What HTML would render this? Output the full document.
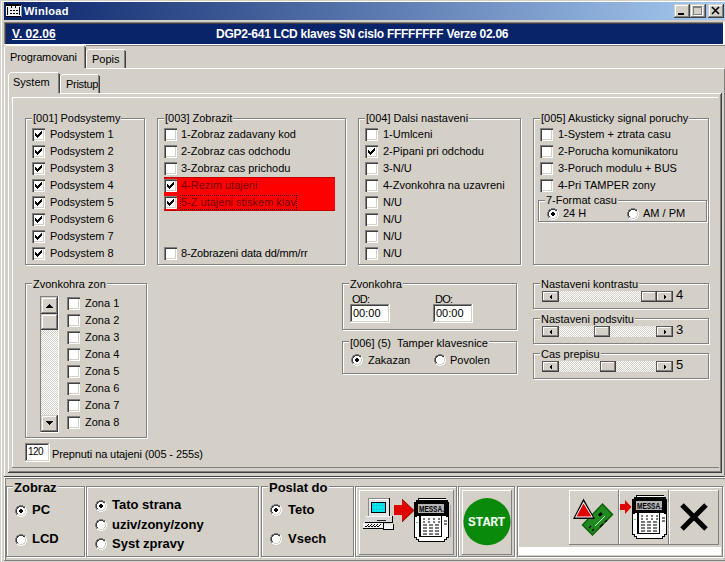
<!DOCTYPE html><html><head><meta charset="utf-8"><style>
html,body{margin:0;padding:0;}
body{width:725px;height:562px;position:relative;overflow:hidden;background:#d4d0c8;font-family:"Liberation Sans",sans-serif;}
body>div,div>div{position:absolute;}
.t{white-space:pre;font-family:"Liberation Sans",sans-serif;}
svg{display:block;}
</style></head><body>
<div style="left:0px;top:0px;width:725px;height:562px;background:#d4d0c8;"></div>
<div style="left:1px;top:1px;width:724px;height:1px;background:#ffffff;"></div>
<div style="left:1px;top:1px;width:1px;height:561px;background:#ffffff;"></div>
<div style="left:4px;top:2px;width:721px;height:18px;background:linear-gradient(to right,#0a246a,#a6caf0);"></div>
<div style="left:6px;top:4px;width:16px;height:14px;"><svg width="16" height="14" shape-rendering="crispEdges"><rect x="0" y="0" width="15" height="2" fill="#000"/><rect x="0" y="2" width="15" height="10" fill="#fff"/><rect x="1" y="3" width="1" height="8" fill="#000"/><rect x="13" y="3" width="1" height="8" fill="#000"/><rect x="2" y="3" width="11" height="8" fill="#ececec"/><rect x="5" y="2" width="1" height="2" fill="#000"/><rect x="9" y="2" width="1" height="2" fill="#000"/><rect x="4" y="6" width="2" height="1" fill="#000"/><rect x="7" y="6" width="2" height="1" fill="#000"/><rect x="10" y="6" width="2" height="1" fill="#000"/><rect x="4" y="9" width="2" height="1" fill="#000"/><rect x="7" y="9" width="2" height="1" fill="#000"/><rect x="10" y="9" width="2" height="1" fill="#000"/><rect x="0" y="12" width="15" height="1" fill="#000"/><rect x="15" y="1" width="1" height="12" fill="#8890a8"/></svg></div>
<div class="t" style="left:24px;top:6px;font-size:11px;line-height:11px;font-weight:bold;color:#fff;letter-spacing:0.3px;">Winload</div>
<div style="left:674px;top:4px;width:16px;height:14px;background:#d4d0c8;"></div>
<div style="left:674px;top:17px;width:16px;height:1px;background:#404040;"></div>
<div style="left:689px;top:4px;width:1px;height:14px;background:#404040;"></div>
<div style="left:675px;top:16px;width:14px;height:1px;background:#808080;"></div>
<div style="left:688px;top:5px;width:1px;height:12px;background:#808080;"></div>
<div style="left:675px;top:5px;width:13px;height:1px;background:#ffffff;"></div>
<div style="left:675px;top:5px;width:1px;height:11px;background:#ffffff;"></div>
<div style="left:674px;top:4px;width:15px;height:1px;background:#d4d0c8;"></div>
<div style="left:674px;top:4px;width:1px;height:13px;background:#d4d0c8;"></div>
<div style="left:690px;top:4px;width:16px;height:14px;background:#d4d0c8;"></div>
<div style="left:690px;top:17px;width:16px;height:1px;background:#404040;"></div>
<div style="left:705px;top:4px;width:1px;height:14px;background:#404040;"></div>
<div style="left:691px;top:16px;width:14px;height:1px;background:#808080;"></div>
<div style="left:704px;top:5px;width:1px;height:12px;background:#808080;"></div>
<div style="left:691px;top:5px;width:13px;height:1px;background:#ffffff;"></div>
<div style="left:691px;top:5px;width:1px;height:11px;background:#ffffff;"></div>
<div style="left:690px;top:4px;width:15px;height:1px;background:#d4d0c8;"></div>
<div style="left:690px;top:4px;width:1px;height:13px;background:#d4d0c8;"></div>
<div style="left:708px;top:4px;width:16px;height:14px;background:#d4d0c8;"></div>
<div style="left:708px;top:17px;width:16px;height:1px;background:#404040;"></div>
<div style="left:723px;top:4px;width:1px;height:14px;background:#404040;"></div>
<div style="left:709px;top:16px;width:14px;height:1px;background:#808080;"></div>
<div style="left:722px;top:5px;width:1px;height:12px;background:#808080;"></div>
<div style="left:709px;top:5px;width:13px;height:1px;background:#ffffff;"></div>
<div style="left:709px;top:5px;width:1px;height:11px;background:#ffffff;"></div>
<div style="left:708px;top:4px;width:15px;height:1px;background:#d4d0c8;"></div>
<div style="left:708px;top:4px;width:1px;height:13px;background:#d4d0c8;"></div>
<div style="left:678px;top:13px;width:6px;height:2px;background:#000;"></div>
<div style="left:693px;top:6px;width:9px;height:9px;border:1px solid #808080;border-top-width:2px;box-sizing:border-box;box-shadow:1px 1px #fff;"></div>
<div style="left:711px;top:6px;width:10px;height:9px;"><svg width="10" height="9"><path d="M1 1L8 8M8 1L1 8" stroke="#000" stroke-width="1.6"/></svg></div>
<div style="left:4px;top:22px;width:721px;height:24px;background:#808080;"></div>
<div style="left:5px;top:23px;width:720px;height:22px;background:#404040;"></div>
<div style="left:6px;top:24px;width:717px;height:20px;background:#0a246a;"></div>
<div style="left:4px;top:44px;width:721px;height:1px;background:#ffffff;"></div>
<div style="left:723px;top:22px;width:2px;height:23px;background:#ffffff;"></div>
<div class="t" style="left:12px;top:28px;font-size:12px;line-height:12px;font-weight:bold;color:#fff;text-decoration-thickness:1px;text-underline-offset:1px;"><u>V. 02.06</u></div>
<div class="t" style="left:216px;top:28px;font-size:12px;line-height:12px;font-weight:bold;color:#fff;letter-spacing:-0.27px;">DGP2-641 LCD klaves SN cislo FFFFFFFF Verze 02.06</div>
<div style="left:4px;top:68px;width:721px;height:409px;background:#d4d0c8;"></div>
<div style="left:4px;top:68px;width:720px;height:1px;background:#ffffff;"></div>
<div style="left:4px;top:68px;width:1px;height:408px;background:#ffffff;"></div>
<div style="left:4px;top:476px;width:721px;height:1px;background:#404040;"></div>
<div style="left:724px;top:69px;width:1px;height:408px;background:#808080;"></div>
<div style="left:5px;top:475px;width:719px;height:1px;background:#d4d0c8;"></div>
<div style="left:4px;top:45px;width:82px;height:24px;background:#d4d0c8;"></div>
<div style="left:6px;top:45px;width:78px;height:1px;background:#ffffff;"></div>
<div style="left:5px;top:46px;width:1px;height:1px;background:#ffffff;"></div>
<div style="left:4px;top:47px;width:1px;height:22px;background:#ffffff;"></div>
<div style="left:84px;top:46px;width:1px;height:22px;background:#808080;"></div>
<div style="left:85px;top:47px;width:1px;height:21px;background:#404040;"></div>
<div class="t" style="left:10px;top:52px;font-size:11px;line-height:11px;color:#000;letter-spacing:-0.15px;">Programovani</div>
<div style="left:88px;top:49px;width:37px;height:1px;background:#ffffff;"></div>
<div style="left:87px;top:50px;width:1px;height:1px;background:#ffffff;"></div>
<div style="left:86px;top:51px;width:1px;height:17px;background:#ffffff;"></div>
<div style="left:124px;top:50px;width:1px;height:18px;background:#808080;"></div>
<div style="left:125px;top:51px;width:1px;height:17px;background:#404040;"></div>
<div class="t" style="left:92px;top:54px;font-size:11px;line-height:11px;color:#000;">Popis</div>
<div style="left:8px;top:93px;width:713px;height:1px;background:#ffffff;"></div>
<div style="left:8px;top:93px;width:1px;height:379px;background:#ffffff;"></div>
<div style="left:8px;top:472px;width:714px;height:1px;background:#404040;"></div>
<div style="left:721px;top:93px;width:1px;height:380px;background:#404040;"></div>
<div style="left:9px;top:471px;width:712px;height:1px;background:#808080;"></div>
<div style="left:720px;top:94px;width:1px;height:377px;background:#808080;"></div>
<div style="left:8px;top:72px;width:52px;height:22px;background:#d4d0c8;"></div>
<div style="left:10px;top:72px;width:48px;height:1px;background:#ffffff;"></div>
<div style="left:9px;top:73px;width:1px;height:1px;background:#ffffff;"></div>
<div style="left:8px;top:74px;width:1px;height:20px;background:#ffffff;"></div>
<div style="left:58px;top:73px;width:1px;height:20px;background:#808080;"></div>
<div style="left:59px;top:74px;width:1px;height:19px;background:#404040;"></div>
<div class="t" style="left:13px;top:77px;font-size:11px;line-height:11px;color:#000;">System</div>
<div style="left:60px;top:74px;width:40px;height:19px;overflow:hidden;"><div class="t" style="left:6px;top:5px;font-size:11px;line-height:11px;letter-spacing:-0.3px;">Pristup</div></div>
<div style="left:62px;top:74px;width:36px;height:1px;background:#ffffff;"></div>
<div style="left:61px;top:75px;width:1px;height:1px;background:#ffffff;"></div>
<div style="left:60px;top:76px;width:1px;height:17px;background:#ffffff;"></div>
<div style="left:98px;top:75px;width:1px;height:18px;background:#808080;"></div>
<div style="left:99px;top:76px;width:1px;height:17px;background:#404040;"></div>
<div style="left:12px;top:97px;width:706px;height:1px;background:#ffffff;"></div>
<div style="left:12px;top:97px;width:1px;height:370px;background:#ffffff;"></div>
<div style="left:12px;top:467px;width:707px;height:1px;background:#808080;"></div>
<div style="left:25px;top:118px;width:118px;height:145px;border:1px solid #808080;box-shadow:inset 1px 1px #ffffff,1px 1px #ffffff;"></div>
<div class="t" style="left:32px;top:113px;font-size:11px;line-height:11px;background:#d4d0c8;padding:0 1px;">[001] Podsystemy</div>
<div style="left:32px;top:128px;width:13px;height:13px;background:#ffffff;box-shadow:inset 1px 1px #808080,inset 2px 2px #404040,inset -1px -1px #ffffff,inset -2px -2px #d4d0c8;"><svg width="7" height="7" style="position:absolute;left:3px;top:3px"><path d="M6 0h1v1h-1zM5 1h2v1h-2zM0 2h1v1h-1zM4 2h3v1h-3zM0 3h2v1h-2zM3 3h3v1h-3zM0 4h5v1h-5zM1 5h3v1h-3zM2 6h1v1h-1z" fill="#000"/></svg></div>
<div class="t" style="left:50px;top:129px;font-size:11px;line-height:11px;color:#000;">Podsystem 1</div>
<div style="left:32px;top:145px;width:13px;height:13px;background:#ffffff;box-shadow:inset 1px 1px #808080,inset 2px 2px #404040,inset -1px -1px #ffffff,inset -2px -2px #d4d0c8;"><svg width="7" height="7" style="position:absolute;left:3px;top:3px"><path d="M6 0h1v1h-1zM5 1h2v1h-2zM0 2h1v1h-1zM4 2h3v1h-3zM0 3h2v1h-2zM3 3h3v1h-3zM0 4h5v1h-5zM1 5h3v1h-3zM2 6h1v1h-1z" fill="#000"/></svg></div>
<div class="t" style="left:50px;top:146px;font-size:11px;line-height:11px;color:#000;">Podsystem 2</div>
<div style="left:32px;top:162px;width:13px;height:13px;background:#ffffff;box-shadow:inset 1px 1px #808080,inset 2px 2px #404040,inset -1px -1px #ffffff,inset -2px -2px #d4d0c8;"><svg width="7" height="7" style="position:absolute;left:3px;top:3px"><path d="M6 0h1v1h-1zM5 1h2v1h-2zM0 2h1v1h-1zM4 2h3v1h-3zM0 3h2v1h-2zM3 3h3v1h-3zM0 4h5v1h-5zM1 5h3v1h-3zM2 6h1v1h-1z" fill="#000"/></svg></div>
<div class="t" style="left:50px;top:163px;font-size:11px;line-height:11px;color:#000;">Podsystem 3</div>
<div style="left:32px;top:179px;width:13px;height:13px;background:#ffffff;box-shadow:inset 1px 1px #808080,inset 2px 2px #404040,inset -1px -1px #ffffff,inset -2px -2px #d4d0c8;"><svg width="7" height="7" style="position:absolute;left:3px;top:3px"><path d="M6 0h1v1h-1zM5 1h2v1h-2zM0 2h1v1h-1zM4 2h3v1h-3zM0 3h2v1h-2zM3 3h3v1h-3zM0 4h5v1h-5zM1 5h3v1h-3zM2 6h1v1h-1z" fill="#000"/></svg></div>
<div class="t" style="left:50px;top:180px;font-size:11px;line-height:11px;color:#000;">Podsystem 4</div>
<div style="left:32px;top:196px;width:13px;height:13px;background:#ffffff;box-shadow:inset 1px 1px #808080,inset 2px 2px #404040,inset -1px -1px #ffffff,inset -2px -2px #d4d0c8;"><svg width="7" height="7" style="position:absolute;left:3px;top:3px"><path d="M6 0h1v1h-1zM5 1h2v1h-2zM0 2h1v1h-1zM4 2h3v1h-3zM0 3h2v1h-2zM3 3h3v1h-3zM0 4h5v1h-5zM1 5h3v1h-3zM2 6h1v1h-1z" fill="#000"/></svg></div>
<div class="t" style="left:50px;top:197px;font-size:11px;line-height:11px;color:#000;">Podsystem 5</div>
<div style="left:32px;top:213px;width:13px;height:13px;background:#ffffff;box-shadow:inset 1px 1px #808080,inset 2px 2px #404040,inset -1px -1px #ffffff,inset -2px -2px #d4d0c8;"><svg width="7" height="7" style="position:absolute;left:3px;top:3px"><path d="M6 0h1v1h-1zM5 1h2v1h-2zM0 2h1v1h-1zM4 2h3v1h-3zM0 3h2v1h-2zM3 3h3v1h-3zM0 4h5v1h-5zM1 5h3v1h-3zM2 6h1v1h-1z" fill="#000"/></svg></div>
<div class="t" style="left:50px;top:214px;font-size:11px;line-height:11px;color:#000;">Podsystem 6</div>
<div style="left:32px;top:230px;width:13px;height:13px;background:#ffffff;box-shadow:inset 1px 1px #808080,inset 2px 2px #404040,inset -1px -1px #ffffff,inset -2px -2px #d4d0c8;"><svg width="7" height="7" style="position:absolute;left:3px;top:3px"><path d="M6 0h1v1h-1zM5 1h2v1h-2zM0 2h1v1h-1zM4 2h3v1h-3zM0 3h2v1h-2zM3 3h3v1h-3zM0 4h5v1h-5zM1 5h3v1h-3zM2 6h1v1h-1z" fill="#000"/></svg></div>
<div class="t" style="left:50px;top:231px;font-size:11px;line-height:11px;color:#000;">Podsystem 7</div>
<div style="left:32px;top:247px;width:13px;height:13px;background:#ffffff;box-shadow:inset 1px 1px #808080,inset 2px 2px #404040,inset -1px -1px #ffffff,inset -2px -2px #d4d0c8;"><svg width="7" height="7" style="position:absolute;left:3px;top:3px"><path d="M6 0h1v1h-1zM5 1h2v1h-2zM0 2h1v1h-1zM4 2h3v1h-3zM0 3h2v1h-2zM3 3h3v1h-3zM0 4h5v1h-5zM1 5h3v1h-3zM2 6h1v1h-1z" fill="#000"/></svg></div>
<div class="t" style="left:50px;top:248px;font-size:11px;line-height:11px;color:#000;">Podsystem 8</div>
<div style="left:157px;top:118px;width:187px;height:145px;border:1px solid #808080;box-shadow:inset 1px 1px #ffffff,1px 1px #ffffff;"></div>
<div class="t" style="left:164px;top:113px;font-size:11px;line-height:11px;background:#d4d0c8;padding:0 1px;">[003] Zobrazit</div>
<div style="left:164px;top:177px;width:171px;height:34px;background:#ff0000;"></div>
<div style="left:164px;top:177px;width:171px;height:1px;background:#c00000;"></div>
<div style="left:164px;top:210px;width:171px;height:1px;background:#c00000;"></div>
<div style="left:164px;top:128px;width:13px;height:13px;background:#ffffff;box-shadow:inset 1px 1px #808080,inset 2px 2px #404040,inset -1px -1px #ffffff,inset -2px -2px #d4d0c8;"></div>
<div class="t" style="left:181px;top:129px;font-size:11px;line-height:11px;color:#000;">1-Zobraz zadavany kod</div>
<div style="left:164px;top:145px;width:13px;height:13px;background:#ffffff;box-shadow:inset 1px 1px #808080,inset 2px 2px #404040,inset -1px -1px #ffffff,inset -2px -2px #d4d0c8;"></div>
<div class="t" style="left:181px;top:146px;font-size:11px;line-height:11px;color:#000;">2-Zobraz cas odchodu</div>
<div style="left:164px;top:162px;width:13px;height:13px;background:#ffffff;box-shadow:inset 1px 1px #808080,inset 2px 2px #404040,inset -1px -1px #ffffff,inset -2px -2px #d4d0c8;"></div>
<div class="t" style="left:181px;top:163px;font-size:11px;line-height:11px;color:#000;">3-Zobraz cas prichodu</div>
<div style="left:164px;top:179px;width:13px;height:13px;background:#ffffff;box-shadow:inset 1px 1px #808080,inset 2px 2px #404040,inset -1px -1px #ffffff,inset -2px -2px #d4d0c8;"><svg width="7" height="7" style="position:absolute;left:3px;top:3px"><path d="M6 0h1v1h-1zM5 1h2v1h-2zM0 2h1v1h-1zM4 2h3v1h-3zM0 3h2v1h-2zM3 3h3v1h-3zM0 4h5v1h-5zM1 5h3v1h-3zM2 6h1v1h-1z" fill="#000"/></svg></div>
<div class="t" style="left:181px;top:180px;font-size:11px;line-height:11px;color:#700000;">4-Rezim utajeni</div>
<div style="left:164px;top:196px;width:13px;height:13px;background:#ffffff;box-shadow:inset 1px 1px #808080,inset 2px 2px #404040,inset -1px -1px #ffffff,inset -2px -2px #d4d0c8;"><svg width="7" height="7" style="position:absolute;left:3px;top:3px"><path d="M6 0h1v1h-1zM5 1h2v1h-2zM0 2h1v1h-1zM4 2h3v1h-3zM0 3h2v1h-2zM3 3h3v1h-3zM0 4h5v1h-5zM1 5h3v1h-3zM2 6h1v1h-1z" fill="#000"/></svg></div>
<div class="t" style="left:181px;top:197px;font-size:11px;line-height:11px;color:#700000;">5-Z utajeni stiskem klav</div>
<div style="left:180px;top:195px;width:117px;height:15px;border:1px dotted #500000;box-sizing:border-box;"></div>
<div style="left:164px;top:247px;width:13px;height:13px;background:#ffffff;box-shadow:inset 1px 1px #808080,inset 2px 2px #404040,inset -1px -1px #ffffff,inset -2px -2px #d4d0c8;"></div>
<div class="t" style="left:181px;top:248px;font-size:11px;line-height:11px;color:#000;letter-spacing:-0.15px;">8-Zobrazeni data dd/mm/rr</div>
<div style="left:358px;top:118px;width:161px;height:145px;border:1px solid #808080;box-shadow:inset 1px 1px #ffffff,1px 1px #ffffff;"></div>
<div class="t" style="left:365px;top:113px;font-size:11px;line-height:11px;background:#d4d0c8;padding:0 1px;">[004] Dalsi nastaveni</div>
<div style="left:365px;top:128px;width:13px;height:13px;background:#ffffff;box-shadow:inset 1px 1px #808080,inset 2px 2px #404040,inset -1px -1px #ffffff,inset -2px -2px #d4d0c8;"></div>
<div class="t" style="left:383px;top:129px;font-size:11px;line-height:11px;color:#000;">1-Umlceni</div>
<div style="left:365px;top:145px;width:13px;height:13px;background:#ffffff;box-shadow:inset 1px 1px #808080,inset 2px 2px #404040,inset -1px -1px #ffffff,inset -2px -2px #d4d0c8;"><svg width="7" height="7" style="position:absolute;left:3px;top:3px"><path d="M6 0h1v1h-1zM5 1h2v1h-2zM0 2h1v1h-1zM4 2h3v1h-3zM0 3h2v1h-2zM3 3h3v1h-3zM0 4h5v1h-5zM1 5h3v1h-3zM2 6h1v1h-1z" fill="#000"/></svg></div>
<div class="t" style="left:383px;top:146px;font-size:11px;line-height:11px;color:#000;">2-Pipani pri odchodu</div>
<div style="left:365px;top:162px;width:13px;height:13px;background:#ffffff;box-shadow:inset 1px 1px #808080,inset 2px 2px #404040,inset -1px -1px #ffffff,inset -2px -2px #d4d0c8;"></div>
<div class="t" style="left:383px;top:163px;font-size:11px;line-height:11px;color:#000;">3-N/U</div>
<div style="left:365px;top:179px;width:13px;height:13px;background:#ffffff;box-shadow:inset 1px 1px #808080,inset 2px 2px #404040,inset -1px -1px #ffffff,inset -2px -2px #d4d0c8;"></div>
<div class="t" style="left:383px;top:180px;font-size:11px;line-height:11px;color:#000;">4-Zvonkohra na uzavreni</div>
<div style="left:365px;top:196px;width:13px;height:13px;background:#ffffff;box-shadow:inset 1px 1px #808080,inset 2px 2px #404040,inset -1px -1px #ffffff,inset -2px -2px #d4d0c8;"></div>
<div class="t" style="left:383px;top:197px;font-size:11px;line-height:11px;color:#000;">N/U</div>
<div style="left:365px;top:213px;width:13px;height:13px;background:#ffffff;box-shadow:inset 1px 1px #808080,inset 2px 2px #404040,inset -1px -1px #ffffff,inset -2px -2px #d4d0c8;"></div>
<div class="t" style="left:383px;top:214px;font-size:11px;line-height:11px;color:#000;">N/U</div>
<div style="left:365px;top:230px;width:13px;height:13px;background:#ffffff;box-shadow:inset 1px 1px #808080,inset 2px 2px #404040,inset -1px -1px #ffffff,inset -2px -2px #d4d0c8;"></div>
<div class="t" style="left:383px;top:231px;font-size:11px;line-height:11px;color:#000;">N/U</div>
<div style="left:365px;top:247px;width:13px;height:13px;background:#ffffff;box-shadow:inset 1px 1px #808080,inset 2px 2px #404040,inset -1px -1px #ffffff,inset -2px -2px #d4d0c8;"></div>
<div class="t" style="left:383px;top:248px;font-size:11px;line-height:11px;color:#000;">N/U</div>
<div style="left:533px;top:118px;width:174px;height:145px;border:1px solid #808080;box-shadow:inset 1px 1px #ffffff,1px 1px #ffffff;"></div>
<div class="t" style="left:540px;top:113px;font-size:11px;line-height:11px;background:#d4d0c8;padding:0 1px;">[005] Akusticky signal poruchy</div>
<div style="left:540px;top:128px;width:13px;height:13px;background:#ffffff;box-shadow:inset 1px 1px #808080,inset 2px 2px #404040,inset -1px -1px #ffffff,inset -2px -2px #d4d0c8;"></div>
<div class="t" style="left:558px;top:129px;font-size:11px;line-height:11px;color:#000;">1-System + ztrata casu</div>
<div style="left:540px;top:145px;width:13px;height:13px;background:#ffffff;box-shadow:inset 1px 1px #808080,inset 2px 2px #404040,inset -1px -1px #ffffff,inset -2px -2px #d4d0c8;"></div>
<div class="t" style="left:558px;top:146px;font-size:11px;line-height:11px;color:#000;">2-Porucha komunikatoru</div>
<div style="left:540px;top:162px;width:13px;height:13px;background:#ffffff;box-shadow:inset 1px 1px #808080,inset 2px 2px #404040,inset -1px -1px #ffffff,inset -2px -2px #d4d0c8;"></div>
<div class="t" style="left:558px;top:163px;font-size:11px;line-height:11px;color:#000;">3-Poruch modulu + BUS</div>
<div style="left:540px;top:179px;width:13px;height:13px;background:#ffffff;box-shadow:inset 1px 1px #808080,inset 2px 2px #404040,inset -1px -1px #ffffff,inset -2px -2px #d4d0c8;"></div>
<div class="t" style="left:558px;top:180px;font-size:11px;line-height:11px;color:#000;">4-Pri TAMPER zony</div>
<div style="left:538px;top:200px;width:167px;height:20px;border:1px solid #808080;box-shadow:inset 1px 1px #ffffff,1px 1px #ffffff;"></div>
<div class="t" style="left:545px;top:195px;font-size:11px;line-height:11px;background:#d4d0c8;padding:0 1px;">7-Format casu</div>
<div style="left:547px;top:208px;width:12px;height:12px;"><svg width="12" height="12" shape-rendering="crispEdges"><path d="M4 0h1v1h-1zM5 0h1v1h-1zM6 0h1v1h-1zM7 0h1v1h-1zM2 1h1v1h-1zM3 1h1v1h-1zM8 1h1v1h-1zM9 1h1v1h-1zM1 2h1v1h-1zM1 3h1v1h-1zM0 4h1v1h-1zM0 5h1v1h-1zM0 6h1v1h-1zM0 7h1v1h-1zM1 8h1v1h-1zM1 9h1v1h-1z" fill="#808080"/><path d="M4 1h1v1h-1zM5 1h1v1h-1zM6 1h1v1h-1zM7 1h1v1h-1zM2 2h1v1h-1zM3 2h1v1h-1zM8 2h1v1h-1zM9 2h1v1h-1zM2 3h1v1h-1zM1 4h1v1h-1zM1 5h1v1h-1zM1 6h1v1h-1zM1 7h1v1h-1zM2 8h1v1h-1z" fill="#404040"/><path d="M4 2h1v1h-1zM5 2h1v1h-1zM6 2h1v1h-1zM7 2h1v1h-1zM10 2h1v1h-1zM3 3h1v1h-1zM4 3h1v1h-1zM5 3h1v1h-1zM6 3h1v1h-1zM7 3h1v1h-1zM8 3h1v1h-1zM10 3h1v1h-1zM2 4h1v1h-1zM3 4h1v1h-1zM4 4h1v1h-1zM7 4h1v1h-1zM8 4h1v1h-1zM9 4h1v1h-1zM11 4h1v1h-1zM2 5h1v1h-1zM3 5h1v1h-1zM8 5h1v1h-1zM9 5h1v1h-1zM11 5h1v1h-1zM2 6h1v1h-1zM3 6h1v1h-1zM8 6h1v1h-1zM9 6h1v1h-1zM11 6h1v1h-1zM2 7h1v1h-1zM3 7h1v1h-1zM4 7h1v1h-1zM7 7h1v1h-1zM8 7h1v1h-1zM9 7h1v1h-1zM11 7h1v1h-1zM3 8h1v1h-1zM4 8h1v1h-1zM5 8h1v1h-1zM6 8h1v1h-1zM7 8h1v1h-1zM8 8h1v1h-1zM10 8h1v1h-1zM4 9h1v1h-1zM5 9h1v1h-1zM6 9h1v1h-1zM7 9h1v1h-1zM10 9h1v1h-1zM2 10h1v1h-1zM3 10h1v1h-1zM8 10h1v1h-1zM9 10h1v1h-1zM4 11h1v1h-1zM5 11h1v1h-1zM6 11h1v1h-1zM7 11h1v1h-1z" fill="#ffffff"/><path d="M9 3h1v1h-1zM10 4h1v1h-1zM10 5h1v1h-1zM10 6h1v1h-1zM10 7h1v1h-1zM9 8h1v1h-1zM2 9h1v1h-1zM3 9h1v1h-1zM8 9h1v1h-1zM9 9h1v1h-1zM4 10h1v1h-1zM5 10h1v1h-1zM6 10h1v1h-1zM7 10h1v1h-1z" fill="#d4d0c8"/><path d="M5 4h1v1h-1zM6 4h1v1h-1zM4 5h1v1h-1zM5 5h1v1h-1zM6 5h1v1h-1zM7 5h1v1h-1zM4 6h1v1h-1zM5 6h1v1h-1zM6 6h1v1h-1zM7 6h1v1h-1zM5 7h1v1h-1zM6 7h1v1h-1z" fill="#000"/></svg></div>
<div class="t" style="left:563px;top:208px;font-size:11px;line-height:11px;color:#000;">24 H</div>
<div style="left:627px;top:208px;width:12px;height:12px;"><svg width="12" height="12" shape-rendering="crispEdges"><path d="M4 0h1v1h-1zM5 0h1v1h-1zM6 0h1v1h-1zM7 0h1v1h-1zM2 1h1v1h-1zM3 1h1v1h-1zM8 1h1v1h-1zM9 1h1v1h-1zM1 2h1v1h-1zM1 3h1v1h-1zM0 4h1v1h-1zM0 5h1v1h-1zM0 6h1v1h-1zM0 7h1v1h-1zM1 8h1v1h-1zM1 9h1v1h-1z" fill="#808080"/><path d="M4 1h1v1h-1zM5 1h1v1h-1zM6 1h1v1h-1zM7 1h1v1h-1zM2 2h1v1h-1zM3 2h1v1h-1zM8 2h1v1h-1zM9 2h1v1h-1zM2 3h1v1h-1zM1 4h1v1h-1zM1 5h1v1h-1zM1 6h1v1h-1zM1 7h1v1h-1zM2 8h1v1h-1z" fill="#404040"/><path d="M4 2h1v1h-1zM5 2h1v1h-1zM6 2h1v1h-1zM7 2h1v1h-1zM10 2h1v1h-1zM3 3h1v1h-1zM4 3h1v1h-1zM5 3h1v1h-1zM6 3h1v1h-1zM7 3h1v1h-1zM8 3h1v1h-1zM10 3h1v1h-1zM2 4h1v1h-1zM3 4h1v1h-1zM4 4h1v1h-1zM5 4h1v1h-1zM6 4h1v1h-1zM7 4h1v1h-1zM8 4h1v1h-1zM9 4h1v1h-1zM11 4h1v1h-1zM2 5h1v1h-1zM3 5h1v1h-1zM4 5h1v1h-1zM5 5h1v1h-1zM6 5h1v1h-1zM7 5h1v1h-1zM8 5h1v1h-1zM9 5h1v1h-1zM11 5h1v1h-1zM2 6h1v1h-1zM3 6h1v1h-1zM4 6h1v1h-1zM5 6h1v1h-1zM6 6h1v1h-1zM7 6h1v1h-1zM8 6h1v1h-1zM9 6h1v1h-1zM11 6h1v1h-1zM2 7h1v1h-1zM3 7h1v1h-1zM4 7h1v1h-1zM5 7h1v1h-1zM6 7h1v1h-1zM7 7h1v1h-1zM8 7h1v1h-1zM9 7h1v1h-1zM11 7h1v1h-1zM3 8h1v1h-1zM4 8h1v1h-1zM5 8h1v1h-1zM6 8h1v1h-1zM7 8h1v1h-1zM8 8h1v1h-1zM10 8h1v1h-1zM4 9h1v1h-1zM5 9h1v1h-1zM6 9h1v1h-1zM7 9h1v1h-1zM10 9h1v1h-1zM2 10h1v1h-1zM3 10h1v1h-1zM8 10h1v1h-1zM9 10h1v1h-1zM4 11h1v1h-1zM5 11h1v1h-1zM6 11h1v1h-1zM7 11h1v1h-1z" fill="#ffffff"/><path d="M9 3h1v1h-1zM10 4h1v1h-1zM10 5h1v1h-1zM10 6h1v1h-1zM10 7h1v1h-1zM9 8h1v1h-1zM2 9h1v1h-1zM3 9h1v1h-1zM8 9h1v1h-1zM9 9h1v1h-1zM4 10h1v1h-1zM5 10h1v1h-1zM6 10h1v1h-1zM7 10h1v1h-1z" fill="#d4d0c8"/></svg></div>
<div class="t" style="left:643px;top:208px;font-size:11px;line-height:11px;color:#000;">AM / PM</div>
<div style="left:25px;top:283px;width:120px;height:153px;border:1px solid #808080;box-shadow:inset 1px 1px #ffffff,1px 1px #ffffff;"></div>
<div class="t" style="left:32px;top:279px;font-size:11px;line-height:11px;background:#d4d0c8;padding:0 1px;">Zvonkohra zon</div>
<div style="left:40px;top:296px;width:19px;height:137px;background:#ffffff;"></div>
<div style="left:40px;top:296px;width:18px;height:1px;background:#808080;"></div>
<div style="left:40px;top:296px;width:1px;height:136px;background:#808080;"></div>
<div style="left:41px;top:313px;width:17px;height:102px;background:repeating-conic-gradient(#ffffff 0 25%,#d4d0c8 0 50%) 0 0/2px 2px;"></div>
<div style="left:41px;top:297px;width:17px;height:17px;background:#d4d0c8;"></div>
<div style="left:41px;top:313px;width:17px;height:1px;background:#404040;"></div>
<div style="left:57px;top:297px;width:1px;height:17px;background:#404040;"></div>
<div style="left:42px;top:312px;width:15px;height:1px;background:#808080;"></div>
<div style="left:56px;top:298px;width:1px;height:15px;background:#808080;"></div>
<div style="left:42px;top:298px;width:14px;height:1px;background:#ffffff;"></div>
<div style="left:42px;top:298px;width:1px;height:14px;background:#ffffff;"></div>
<div style="left:41px;top:297px;width:16px;height:1px;background:#d4d0c8;"></div>
<div style="left:41px;top:297px;width:1px;height:16px;background:#d4d0c8;"></div>
<div style="left:41px;top:314px;width:17px;height:16px;background:#d4d0c8;"></div>
<div style="left:41px;top:329px;width:17px;height:1px;background:#404040;"></div>
<div style="left:57px;top:314px;width:1px;height:16px;background:#404040;"></div>
<div style="left:42px;top:328px;width:15px;height:1px;background:#808080;"></div>
<div style="left:56px;top:315px;width:1px;height:14px;background:#808080;"></div>
<div style="left:42px;top:315px;width:14px;height:1px;background:#ffffff;"></div>
<div style="left:42px;top:315px;width:1px;height:13px;background:#ffffff;"></div>
<div style="left:41px;top:314px;width:16px;height:1px;background:#d4d0c8;"></div>
<div style="left:41px;top:314px;width:1px;height:15px;background:#d4d0c8;"></div>
<div style="left:41px;top:415px;width:17px;height:17px;background:#d4d0c8;"></div>
<div style="left:41px;top:431px;width:17px;height:1px;background:#404040;"></div>
<div style="left:57px;top:415px;width:1px;height:17px;background:#404040;"></div>
<div style="left:42px;top:430px;width:15px;height:1px;background:#808080;"></div>
<div style="left:56px;top:416px;width:1px;height:15px;background:#808080;"></div>
<div style="left:42px;top:416px;width:14px;height:1px;background:#ffffff;"></div>
<div style="left:42px;top:416px;width:1px;height:14px;background:#ffffff;"></div>
<div style="left:41px;top:415px;width:16px;height:1px;background:#d4d0c8;"></div>
<div style="left:41px;top:415px;width:1px;height:16px;background:#d4d0c8;"></div>
<div style="left:46px;top:304px;width:7px;height:4px;"><svg width="7" height="4"><path d="M3 0h1v1h1v1h1v1h1v1H0V3h1V2h1V1h1z" fill="#000"/></svg></div>
<div style="left:46px;top:421px;width:7px;height:4px;"><svg width="7" height="4"><path d="M0 0h7v1H6v1H5v1H4v1H3V3H2V2H1V1H0z" fill="#000"/></svg></div>
<div style="left:67px;top:297px;width:13px;height:13px;background:#ffffff;box-shadow:inset 1px 1px #808080,inset 2px 2px #404040,inset -1px -1px #ffffff,inset -2px -2px #d4d0c8;"></div>
<div class="t" style="left:85px;top:298px;font-size:11px;line-height:11px;color:#000;">Zona 1</div>
<div style="left:67px;top:314px;width:13px;height:13px;background:#ffffff;box-shadow:inset 1px 1px #808080,inset 2px 2px #404040,inset -1px -1px #ffffff,inset -2px -2px #d4d0c8;"></div>
<div class="t" style="left:85px;top:315px;font-size:11px;line-height:11px;color:#000;">Zona 2</div>
<div style="left:67px;top:331px;width:13px;height:13px;background:#ffffff;box-shadow:inset 1px 1px #808080,inset 2px 2px #404040,inset -1px -1px #ffffff,inset -2px -2px #d4d0c8;"></div>
<div class="t" style="left:85px;top:332px;font-size:11px;line-height:11px;color:#000;">Zona 3</div>
<div style="left:67px;top:348px;width:13px;height:13px;background:#ffffff;box-shadow:inset 1px 1px #808080,inset 2px 2px #404040,inset -1px -1px #ffffff,inset -2px -2px #d4d0c8;"></div>
<div class="t" style="left:85px;top:349px;font-size:11px;line-height:11px;color:#000;">Zona 4</div>
<div style="left:67px;top:365px;width:13px;height:13px;background:#ffffff;box-shadow:inset 1px 1px #808080,inset 2px 2px #404040,inset -1px -1px #ffffff,inset -2px -2px #d4d0c8;"></div>
<div class="t" style="left:85px;top:366px;font-size:11px;line-height:11px;color:#000;">Zona 5</div>
<div style="left:67px;top:382px;width:13px;height:13px;background:#ffffff;box-shadow:inset 1px 1px #808080,inset 2px 2px #404040,inset -1px -1px #ffffff,inset -2px -2px #d4d0c8;"></div>
<div class="t" style="left:85px;top:383px;font-size:11px;line-height:11px;color:#000;">Zona 6</div>
<div style="left:67px;top:399px;width:13px;height:13px;background:#ffffff;box-shadow:inset 1px 1px #808080,inset 2px 2px #404040,inset -1px -1px #ffffff,inset -2px -2px #d4d0c8;"></div>
<div class="t" style="left:85px;top:400px;font-size:11px;line-height:11px;color:#000;">Zona 7</div>
<div style="left:67px;top:416px;width:13px;height:13px;background:#ffffff;box-shadow:inset 1px 1px #808080,inset 2px 2px #404040,inset -1px -1px #ffffff,inset -2px -2px #d4d0c8;"></div>
<div class="t" style="left:85px;top:417px;font-size:11px;line-height:11px;color:#000;">Zona 8</div>
<div style="left:25px;top:443px;width:25px;height:19px;background:#ffffff;"></div>
<div style="left:25px;top:443px;width:25px;height:1px;background:#808080;"></div>
<div style="left:25px;top:443px;width:1px;height:19px;background:#808080;"></div>
<div style="left:26px;top:444px;width:23px;height:1px;background:#404040;"></div>
<div style="left:26px;top:444px;width:1px;height:17px;background:#404040;"></div>
<div style="left:25px;top:461px;width:25px;height:1px;background:#ffffff;"></div>
<div style="left:49px;top:443px;width:1px;height:19px;background:#ffffff;"></div>
<div style="left:26px;top:460px;width:23px;height:1px;background:#d4d0c8;"></div>
<div style="left:48px;top:444px;width:1px;height:16px;background:#d4d0c8;"></div>
<div class="t" style="left:28px;top:447px;font-size:10px;line-height:10px;color:#000;letter-spacing:-0.6px;">120</div>
<div class="t" style="left:52px;top:449px;font-size:11px;line-height:11px;color:#000;letter-spacing:-0.1px;">Prepnuti na utajeni (005 - 255s)</div>
<div style="left:342px;top:283px;width:173px;height:45px;border:1px solid #808080;box-shadow:inset 1px 1px #ffffff,1px 1px #ffffff;"></div>
<div class="t" style="left:349px;top:279px;font-size:11px;line-height:11px;background:#d4d0c8;padding:0 1px;">Zvonkohra</div>
<div class="t" style="left:352px;top:294px;font-size:11px;line-height:11px;color:#000;letter-spacing:-0.7px;">OD:</div>
<div class="t" style="left:435px;top:294px;font-size:11px;line-height:11px;color:#000;letter-spacing:-0.7px;">DO:</div>
<div style="left:350px;top:304px;width:40px;height:19px;background:#ffffff;"></div>
<div style="left:350px;top:304px;width:40px;height:1px;background:#808080;"></div>
<div style="left:350px;top:304px;width:1px;height:19px;background:#808080;"></div>
<div style="left:351px;top:305px;width:38px;height:1px;background:#404040;"></div>
<div style="left:351px;top:305px;width:1px;height:17px;background:#404040;"></div>
<div style="left:350px;top:322px;width:40px;height:1px;background:#ffffff;"></div>
<div style="left:389px;top:304px;width:1px;height:19px;background:#ffffff;"></div>
<div style="left:351px;top:321px;width:38px;height:1px;background:#d4d0c8;"></div>
<div style="left:388px;top:305px;width:1px;height:16px;background:#d4d0c8;"></div>
<div style="left:433px;top:304px;width:40px;height:19px;background:#ffffff;"></div>
<div style="left:433px;top:304px;width:40px;height:1px;background:#808080;"></div>
<div style="left:433px;top:304px;width:1px;height:19px;background:#808080;"></div>
<div style="left:434px;top:305px;width:38px;height:1px;background:#404040;"></div>
<div style="left:434px;top:305px;width:1px;height:17px;background:#404040;"></div>
<div style="left:433px;top:322px;width:40px;height:1px;background:#ffffff;"></div>
<div style="left:472px;top:304px;width:1px;height:19px;background:#ffffff;"></div>
<div style="left:434px;top:321px;width:38px;height:1px;background:#d4d0c8;"></div>
<div style="left:471px;top:305px;width:1px;height:16px;background:#d4d0c8;"></div>
<div class="t" style="left:353px;top:308px;font-size:11px;line-height:11px;color:#000;">00:00</div>
<div class="t" style="left:436px;top:308px;font-size:11px;line-height:11px;color:#000;">00:00</div>
<div style="left:342px;top:341px;width:173px;height:31px;border:1px solid #808080;box-shadow:inset 1px 1px #ffffff,1px 1px #ffffff;"></div>
<div class="t" style="left:349px;top:338px;font-size:11px;line-height:11px;background:#d4d0c8;padding:0 1px;">[006] (5)&nbsp; Tamper klavesnice</div>
<div style="left:351px;top:354px;width:12px;height:12px;"><svg width="12" height="12" shape-rendering="crispEdges"><path d="M4 0h1v1h-1zM5 0h1v1h-1zM6 0h1v1h-1zM7 0h1v1h-1zM2 1h1v1h-1zM3 1h1v1h-1zM8 1h1v1h-1zM9 1h1v1h-1zM1 2h1v1h-1zM1 3h1v1h-1zM0 4h1v1h-1zM0 5h1v1h-1zM0 6h1v1h-1zM0 7h1v1h-1zM1 8h1v1h-1zM1 9h1v1h-1z" fill="#808080"/><path d="M4 1h1v1h-1zM5 1h1v1h-1zM6 1h1v1h-1zM7 1h1v1h-1zM2 2h1v1h-1zM3 2h1v1h-1zM8 2h1v1h-1zM9 2h1v1h-1zM2 3h1v1h-1zM1 4h1v1h-1zM1 5h1v1h-1zM1 6h1v1h-1zM1 7h1v1h-1zM2 8h1v1h-1z" fill="#404040"/><path d="M4 2h1v1h-1zM5 2h1v1h-1zM6 2h1v1h-1zM7 2h1v1h-1zM10 2h1v1h-1zM3 3h1v1h-1zM4 3h1v1h-1zM5 3h1v1h-1zM6 3h1v1h-1zM7 3h1v1h-1zM8 3h1v1h-1zM10 3h1v1h-1zM2 4h1v1h-1zM3 4h1v1h-1zM4 4h1v1h-1zM7 4h1v1h-1zM8 4h1v1h-1zM9 4h1v1h-1zM11 4h1v1h-1zM2 5h1v1h-1zM3 5h1v1h-1zM8 5h1v1h-1zM9 5h1v1h-1zM11 5h1v1h-1zM2 6h1v1h-1zM3 6h1v1h-1zM8 6h1v1h-1zM9 6h1v1h-1zM11 6h1v1h-1zM2 7h1v1h-1zM3 7h1v1h-1zM4 7h1v1h-1zM7 7h1v1h-1zM8 7h1v1h-1zM9 7h1v1h-1zM11 7h1v1h-1zM3 8h1v1h-1zM4 8h1v1h-1zM5 8h1v1h-1zM6 8h1v1h-1zM7 8h1v1h-1zM8 8h1v1h-1zM10 8h1v1h-1zM4 9h1v1h-1zM5 9h1v1h-1zM6 9h1v1h-1zM7 9h1v1h-1zM10 9h1v1h-1zM2 10h1v1h-1zM3 10h1v1h-1zM8 10h1v1h-1zM9 10h1v1h-1zM4 11h1v1h-1zM5 11h1v1h-1zM6 11h1v1h-1zM7 11h1v1h-1z" fill="#ffffff"/><path d="M9 3h1v1h-1zM10 4h1v1h-1zM10 5h1v1h-1zM10 6h1v1h-1zM10 7h1v1h-1zM9 8h1v1h-1zM2 9h1v1h-1zM3 9h1v1h-1zM8 9h1v1h-1zM9 9h1v1h-1zM4 10h1v1h-1zM5 10h1v1h-1zM6 10h1v1h-1zM7 10h1v1h-1z" fill="#d4d0c8"/><path d="M5 4h1v1h-1zM6 4h1v1h-1zM4 5h1v1h-1zM5 5h1v1h-1zM6 5h1v1h-1zM7 5h1v1h-1zM4 6h1v1h-1zM5 6h1v1h-1zM6 6h1v1h-1zM7 6h1v1h-1zM5 7h1v1h-1zM6 7h1v1h-1z" fill="#000"/></svg></div>
<div class="t" style="left:368px;top:355px;font-size:11px;line-height:11px;color:#000;">Zakazan</div>
<div style="left:434px;top:354px;width:12px;height:12px;"><svg width="12" height="12" shape-rendering="crispEdges"><path d="M4 0h1v1h-1zM5 0h1v1h-1zM6 0h1v1h-1zM7 0h1v1h-1zM2 1h1v1h-1zM3 1h1v1h-1zM8 1h1v1h-1zM9 1h1v1h-1zM1 2h1v1h-1zM1 3h1v1h-1zM0 4h1v1h-1zM0 5h1v1h-1zM0 6h1v1h-1zM0 7h1v1h-1zM1 8h1v1h-1zM1 9h1v1h-1z" fill="#808080"/><path d="M4 1h1v1h-1zM5 1h1v1h-1zM6 1h1v1h-1zM7 1h1v1h-1zM2 2h1v1h-1zM3 2h1v1h-1zM8 2h1v1h-1zM9 2h1v1h-1zM2 3h1v1h-1zM1 4h1v1h-1zM1 5h1v1h-1zM1 6h1v1h-1zM1 7h1v1h-1zM2 8h1v1h-1z" fill="#404040"/><path d="M4 2h1v1h-1zM5 2h1v1h-1zM6 2h1v1h-1zM7 2h1v1h-1zM10 2h1v1h-1zM3 3h1v1h-1zM4 3h1v1h-1zM5 3h1v1h-1zM6 3h1v1h-1zM7 3h1v1h-1zM8 3h1v1h-1zM10 3h1v1h-1zM2 4h1v1h-1zM3 4h1v1h-1zM4 4h1v1h-1zM5 4h1v1h-1zM6 4h1v1h-1zM7 4h1v1h-1zM8 4h1v1h-1zM9 4h1v1h-1zM11 4h1v1h-1zM2 5h1v1h-1zM3 5h1v1h-1zM4 5h1v1h-1zM5 5h1v1h-1zM6 5h1v1h-1zM7 5h1v1h-1zM8 5h1v1h-1zM9 5h1v1h-1zM11 5h1v1h-1zM2 6h1v1h-1zM3 6h1v1h-1zM4 6h1v1h-1zM5 6h1v1h-1zM6 6h1v1h-1zM7 6h1v1h-1zM8 6h1v1h-1zM9 6h1v1h-1zM11 6h1v1h-1zM2 7h1v1h-1zM3 7h1v1h-1zM4 7h1v1h-1zM5 7h1v1h-1zM6 7h1v1h-1zM7 7h1v1h-1zM8 7h1v1h-1zM9 7h1v1h-1zM11 7h1v1h-1zM3 8h1v1h-1zM4 8h1v1h-1zM5 8h1v1h-1zM6 8h1v1h-1zM7 8h1v1h-1zM8 8h1v1h-1zM10 8h1v1h-1zM4 9h1v1h-1zM5 9h1v1h-1zM6 9h1v1h-1zM7 9h1v1h-1zM10 9h1v1h-1zM2 10h1v1h-1zM3 10h1v1h-1zM8 10h1v1h-1zM9 10h1v1h-1zM4 11h1v1h-1zM5 11h1v1h-1zM6 11h1v1h-1zM7 11h1v1h-1z" fill="#ffffff"/><path d="M9 3h1v1h-1zM10 4h1v1h-1zM10 5h1v1h-1zM10 6h1v1h-1zM10 7h1v1h-1zM9 8h1v1h-1zM2 9h1v1h-1zM3 9h1v1h-1zM8 9h1v1h-1zM9 9h1v1h-1zM4 10h1v1h-1zM5 10h1v1h-1zM6 10h1v1h-1zM7 10h1v1h-1z" fill="#d4d0c8"/></svg></div>
<div class="t" style="left:450px;top:355px;font-size:11px;line-height:11px;color:#000;">Povolen</div>
<div style="left:533px;top:283px;width:174px;height:24px;border:1px solid #808080;box-shadow:inset 1px 1px #ffffff,1px 1px #ffffff;"></div>
<div class="t" style="left:540px;top:279px;font-size:11px;line-height:11px;background:#d4d0c8;padding:0 1px;">Nastaveni kontrastu</div>
<div style="left:542px;top:291px;width:131px;height:11px;background:repeating-conic-gradient(#ffffff 0 25%,#d4d0c8 0 50%) 0 0/2px 2px;"></div>
<div style="left:542px;top:291px;width:17px;height:11px;background:#d4d0c8;"></div>
<div style="left:542px;top:291px;width:17px;height:1px;background:#5a5a5a;"></div>
<div style="left:542px;top:291px;width:1px;height:11px;background:#5a5a5a;"></div>
<div style="left:542px;top:301px;width:17px;height:1px;background:#404040;"></div>
<div style="left:558px;top:291px;width:1px;height:11px;background:#404040;"></div>
<div style="left:543px;top:292px;width:15px;height:1px;background:#ffffff;"></div>
<div style="left:543px;top:292px;width:1px;height:9px;background:#ffffff;"></div>
<div style="left:543px;top:300px;width:15px;height:1px;background:#808080;"></div>
<div style="left:557px;top:292px;width:1px;height:9px;background:#808080;"></div>
<div style="left:656px;top:291px;width:17px;height:11px;background:#d4d0c8;"></div>
<div style="left:656px;top:291px;width:17px;height:1px;background:#5a5a5a;"></div>
<div style="left:656px;top:291px;width:1px;height:11px;background:#5a5a5a;"></div>
<div style="left:656px;top:301px;width:17px;height:1px;background:#404040;"></div>
<div style="left:672px;top:291px;width:1px;height:11px;background:#404040;"></div>
<div style="left:657px;top:292px;width:15px;height:1px;background:#ffffff;"></div>
<div style="left:657px;top:292px;width:1px;height:9px;background:#ffffff;"></div>
<div style="left:657px;top:300px;width:15px;height:1px;background:#808080;"></div>
<div style="left:671px;top:292px;width:1px;height:9px;background:#808080;"></div>
<div style="left:641px;top:291px;width:16px;height:11px;background:#d4d0c8;"></div>
<div style="left:641px;top:291px;width:16px;height:1px;background:#5a5a5a;"></div>
<div style="left:641px;top:291px;width:1px;height:11px;background:#5a5a5a;"></div>
<div style="left:641px;top:301px;width:16px;height:1px;background:#404040;"></div>
<div style="left:656px;top:291px;width:1px;height:11px;background:#404040;"></div>
<div style="left:642px;top:292px;width:14px;height:1px;background:#ffffff;"></div>
<div style="left:642px;top:292px;width:1px;height:9px;background:#ffffff;"></div>
<div style="left:642px;top:300px;width:14px;height:1px;background:#808080;"></div>
<div style="left:655px;top:292px;width:1px;height:9px;background:#808080;"></div>
<div style="left:550px;top:295px;width:2px;height:4px;"><svg width="2" height="4"><path d="M1 0h1v4H1V3H0V1h1z" fill="#000"/></svg></div>
<div style="left:664px;top:295px;width:2px;height:4px;"><svg width="2" height="4"><path d="M0 0h1v1h1v2H1v1H0z" fill="#000"/></svg></div>
<div class="t" style="left:676px;top:288px;font-size:13px;line-height:13px;color:#000;">4</div>
<div style="left:533px;top:318px;width:174px;height:24px;border:1px solid #808080;box-shadow:inset 1px 1px #ffffff,1px 1px #ffffff;"></div>
<div class="t" style="left:540px;top:314px;font-size:11px;line-height:11px;background:#d4d0c8;padding:0 1px;">Nastaveni podsvitu</div>
<div style="left:542px;top:326px;width:131px;height:11px;background:repeating-conic-gradient(#ffffff 0 25%,#d4d0c8 0 50%) 0 0/2px 2px;"></div>
<div style="left:542px;top:326px;width:17px;height:11px;background:#d4d0c8;"></div>
<div style="left:542px;top:326px;width:17px;height:1px;background:#5a5a5a;"></div>
<div style="left:542px;top:326px;width:1px;height:11px;background:#5a5a5a;"></div>
<div style="left:542px;top:336px;width:17px;height:1px;background:#404040;"></div>
<div style="left:558px;top:326px;width:1px;height:11px;background:#404040;"></div>
<div style="left:543px;top:327px;width:15px;height:1px;background:#ffffff;"></div>
<div style="left:543px;top:327px;width:1px;height:9px;background:#ffffff;"></div>
<div style="left:543px;top:335px;width:15px;height:1px;background:#808080;"></div>
<div style="left:557px;top:327px;width:1px;height:9px;background:#808080;"></div>
<div style="left:656px;top:326px;width:17px;height:11px;background:#d4d0c8;"></div>
<div style="left:656px;top:326px;width:17px;height:1px;background:#5a5a5a;"></div>
<div style="left:656px;top:326px;width:1px;height:11px;background:#5a5a5a;"></div>
<div style="left:656px;top:336px;width:17px;height:1px;background:#404040;"></div>
<div style="left:672px;top:326px;width:1px;height:11px;background:#404040;"></div>
<div style="left:657px;top:327px;width:15px;height:1px;background:#ffffff;"></div>
<div style="left:657px;top:327px;width:1px;height:9px;background:#ffffff;"></div>
<div style="left:657px;top:335px;width:15px;height:1px;background:#808080;"></div>
<div style="left:671px;top:327px;width:1px;height:9px;background:#808080;"></div>
<div style="left:594px;top:326px;width:16px;height:11px;background:#d4d0c8;"></div>
<div style="left:594px;top:326px;width:16px;height:1px;background:#5a5a5a;"></div>
<div style="left:594px;top:326px;width:1px;height:11px;background:#5a5a5a;"></div>
<div style="left:594px;top:336px;width:16px;height:1px;background:#404040;"></div>
<div style="left:609px;top:326px;width:1px;height:11px;background:#404040;"></div>
<div style="left:595px;top:327px;width:14px;height:1px;background:#ffffff;"></div>
<div style="left:595px;top:327px;width:1px;height:9px;background:#ffffff;"></div>
<div style="left:595px;top:335px;width:14px;height:1px;background:#808080;"></div>
<div style="left:608px;top:327px;width:1px;height:9px;background:#808080;"></div>
<div style="left:550px;top:330px;width:2px;height:4px;"><svg width="2" height="4"><path d="M1 0h1v4H1V3H0V1h1z" fill="#000"/></svg></div>
<div style="left:664px;top:330px;width:2px;height:4px;"><svg width="2" height="4"><path d="M0 0h1v1h1v2H1v1H0z" fill="#000"/></svg></div>
<div class="t" style="left:676px;top:323px;font-size:13px;line-height:13px;color:#000;">3</div>
<div style="left:533px;top:353px;width:174px;height:24px;border:1px solid #808080;box-shadow:inset 1px 1px #ffffff,1px 1px #ffffff;"></div>
<div class="t" style="left:540px;top:349px;font-size:11px;line-height:11px;background:#d4d0c8;padding:0 1px;">Cas prepisu</div>
<div style="left:542px;top:361px;width:131px;height:11px;background:repeating-conic-gradient(#ffffff 0 25%,#d4d0c8 0 50%) 0 0/2px 2px;"></div>
<div style="left:542px;top:361px;width:17px;height:11px;background:#d4d0c8;"></div>
<div style="left:542px;top:361px;width:17px;height:1px;background:#5a5a5a;"></div>
<div style="left:542px;top:361px;width:1px;height:11px;background:#5a5a5a;"></div>
<div style="left:542px;top:371px;width:17px;height:1px;background:#404040;"></div>
<div style="left:558px;top:361px;width:1px;height:11px;background:#404040;"></div>
<div style="left:543px;top:362px;width:15px;height:1px;background:#ffffff;"></div>
<div style="left:543px;top:362px;width:1px;height:9px;background:#ffffff;"></div>
<div style="left:543px;top:370px;width:15px;height:1px;background:#808080;"></div>
<div style="left:557px;top:362px;width:1px;height:9px;background:#808080;"></div>
<div style="left:656px;top:361px;width:17px;height:11px;background:#d4d0c8;"></div>
<div style="left:656px;top:361px;width:17px;height:1px;background:#5a5a5a;"></div>
<div style="left:656px;top:361px;width:1px;height:11px;background:#5a5a5a;"></div>
<div style="left:656px;top:371px;width:17px;height:1px;background:#404040;"></div>
<div style="left:672px;top:361px;width:1px;height:11px;background:#404040;"></div>
<div style="left:657px;top:362px;width:15px;height:1px;background:#ffffff;"></div>
<div style="left:657px;top:362px;width:1px;height:9px;background:#ffffff;"></div>
<div style="left:657px;top:370px;width:15px;height:1px;background:#808080;"></div>
<div style="left:671px;top:362px;width:1px;height:9px;background:#808080;"></div>
<div style="left:600px;top:361px;width:16px;height:11px;background:#d4d0c8;"></div>
<div style="left:600px;top:361px;width:16px;height:1px;background:#5a5a5a;"></div>
<div style="left:600px;top:361px;width:1px;height:11px;background:#5a5a5a;"></div>
<div style="left:600px;top:371px;width:16px;height:1px;background:#404040;"></div>
<div style="left:615px;top:361px;width:1px;height:11px;background:#404040;"></div>
<div style="left:601px;top:362px;width:14px;height:1px;background:#ffffff;"></div>
<div style="left:601px;top:362px;width:1px;height:9px;background:#ffffff;"></div>
<div style="left:601px;top:370px;width:14px;height:1px;background:#808080;"></div>
<div style="left:614px;top:362px;width:1px;height:9px;background:#808080;"></div>
<div style="left:550px;top:365px;width:2px;height:4px;"><svg width="2" height="4"><path d="M1 0h1v4H1V3H0V1h1z" fill="#000"/></svg></div>
<div style="left:664px;top:365px;width:2px;height:4px;"><svg width="2" height="4"><path d="M0 0h1v1h1v2H1v1H0z" fill="#000"/></svg></div>
<div class="t" style="left:676px;top:358px;font-size:13px;line-height:13px;color:#000;">5</div>
<div style="left:4px;top:477px;width:721px;height:1px;background:#ffffff;"></div>
<div style="left:4px;top:477px;width:1px;height:85px;background:#ffffff;"></div>
<div style="left:5px;top:478px;width:720px;height:1px;background:#808080;"></div>
<div style="left:5px;top:478px;width:1px;height:83px;background:#808080;"></div>
<div style="left:4px;top:560px;width:721px;height:1px;background:#808080;"></div>
<div style="left:6px;top:486px;width:77px;height:69px;border:1px solid #808080;box-shadow:inset 1px 1px #ffffff,1px 1px #ffffff;"></div>
<div class="t" style="left:13px;top:481px;font-size:13px;line-height:13px;font-weight:bold;background:#d4d0c8;padding:0 1px;">Zobraz</div>
<div style="left:15px;top:505px;width:12px;height:12px;"><svg width="12" height="12" shape-rendering="crispEdges"><path d="M4 0h1v1h-1zM5 0h1v1h-1zM6 0h1v1h-1zM7 0h1v1h-1zM2 1h1v1h-1zM3 1h1v1h-1zM8 1h1v1h-1zM9 1h1v1h-1zM1 2h1v1h-1zM1 3h1v1h-1zM0 4h1v1h-1zM0 5h1v1h-1zM0 6h1v1h-1zM0 7h1v1h-1zM1 8h1v1h-1zM1 9h1v1h-1z" fill="#808080"/><path d="M4 1h1v1h-1zM5 1h1v1h-1zM6 1h1v1h-1zM7 1h1v1h-1zM2 2h1v1h-1zM3 2h1v1h-1zM8 2h1v1h-1zM9 2h1v1h-1zM2 3h1v1h-1zM1 4h1v1h-1zM1 5h1v1h-1zM1 6h1v1h-1zM1 7h1v1h-1zM2 8h1v1h-1z" fill="#404040"/><path d="M4 2h1v1h-1zM5 2h1v1h-1zM6 2h1v1h-1zM7 2h1v1h-1zM10 2h1v1h-1zM3 3h1v1h-1zM4 3h1v1h-1zM5 3h1v1h-1zM6 3h1v1h-1zM7 3h1v1h-1zM8 3h1v1h-1zM10 3h1v1h-1zM2 4h1v1h-1zM3 4h1v1h-1zM4 4h1v1h-1zM7 4h1v1h-1zM8 4h1v1h-1zM9 4h1v1h-1zM11 4h1v1h-1zM2 5h1v1h-1zM3 5h1v1h-1zM8 5h1v1h-1zM9 5h1v1h-1zM11 5h1v1h-1zM2 6h1v1h-1zM3 6h1v1h-1zM8 6h1v1h-1zM9 6h1v1h-1zM11 6h1v1h-1zM2 7h1v1h-1zM3 7h1v1h-1zM4 7h1v1h-1zM7 7h1v1h-1zM8 7h1v1h-1zM9 7h1v1h-1zM11 7h1v1h-1zM3 8h1v1h-1zM4 8h1v1h-1zM5 8h1v1h-1zM6 8h1v1h-1zM7 8h1v1h-1zM8 8h1v1h-1zM10 8h1v1h-1zM4 9h1v1h-1zM5 9h1v1h-1zM6 9h1v1h-1zM7 9h1v1h-1zM10 9h1v1h-1zM2 10h1v1h-1zM3 10h1v1h-1zM8 10h1v1h-1zM9 10h1v1h-1zM4 11h1v1h-1zM5 11h1v1h-1zM6 11h1v1h-1zM7 11h1v1h-1z" fill="#ffffff"/><path d="M9 3h1v1h-1zM10 4h1v1h-1zM10 5h1v1h-1zM10 6h1v1h-1zM10 7h1v1h-1zM9 8h1v1h-1zM2 9h1v1h-1zM3 9h1v1h-1zM8 9h1v1h-1zM9 9h1v1h-1zM4 10h1v1h-1zM5 10h1v1h-1zM6 10h1v1h-1zM7 10h1v1h-1z" fill="#d4d0c8"/><path d="M5 4h1v1h-1zM6 4h1v1h-1zM4 5h1v1h-1zM5 5h1v1h-1zM6 5h1v1h-1zM7 5h1v1h-1zM4 6h1v1h-1zM5 6h1v1h-1zM6 6h1v1h-1zM7 6h1v1h-1zM5 7h1v1h-1zM6 7h1v1h-1z" fill="#000"/></svg></div>
<div class="t" style="left:32px;top:503px;font-size:13px;line-height:13px;font-weight:bold;color:#000;">PC</div>
<div style="left:15px;top:534px;width:12px;height:12px;"><svg width="12" height="12" shape-rendering="crispEdges"><path d="M4 0h1v1h-1zM5 0h1v1h-1zM6 0h1v1h-1zM7 0h1v1h-1zM2 1h1v1h-1zM3 1h1v1h-1zM8 1h1v1h-1zM9 1h1v1h-1zM1 2h1v1h-1zM1 3h1v1h-1zM0 4h1v1h-1zM0 5h1v1h-1zM0 6h1v1h-1zM0 7h1v1h-1zM1 8h1v1h-1zM1 9h1v1h-1z" fill="#808080"/><path d="M4 1h1v1h-1zM5 1h1v1h-1zM6 1h1v1h-1zM7 1h1v1h-1zM2 2h1v1h-1zM3 2h1v1h-1zM8 2h1v1h-1zM9 2h1v1h-1zM2 3h1v1h-1zM1 4h1v1h-1zM1 5h1v1h-1zM1 6h1v1h-1zM1 7h1v1h-1zM2 8h1v1h-1z" fill="#404040"/><path d="M4 2h1v1h-1zM5 2h1v1h-1zM6 2h1v1h-1zM7 2h1v1h-1zM10 2h1v1h-1zM3 3h1v1h-1zM4 3h1v1h-1zM5 3h1v1h-1zM6 3h1v1h-1zM7 3h1v1h-1zM8 3h1v1h-1zM10 3h1v1h-1zM2 4h1v1h-1zM3 4h1v1h-1zM4 4h1v1h-1zM5 4h1v1h-1zM6 4h1v1h-1zM7 4h1v1h-1zM8 4h1v1h-1zM9 4h1v1h-1zM11 4h1v1h-1zM2 5h1v1h-1zM3 5h1v1h-1zM4 5h1v1h-1zM5 5h1v1h-1zM6 5h1v1h-1zM7 5h1v1h-1zM8 5h1v1h-1zM9 5h1v1h-1zM11 5h1v1h-1zM2 6h1v1h-1zM3 6h1v1h-1zM4 6h1v1h-1zM5 6h1v1h-1zM6 6h1v1h-1zM7 6h1v1h-1zM8 6h1v1h-1zM9 6h1v1h-1zM11 6h1v1h-1zM2 7h1v1h-1zM3 7h1v1h-1zM4 7h1v1h-1zM5 7h1v1h-1zM6 7h1v1h-1zM7 7h1v1h-1zM8 7h1v1h-1zM9 7h1v1h-1zM11 7h1v1h-1zM3 8h1v1h-1zM4 8h1v1h-1zM5 8h1v1h-1zM6 8h1v1h-1zM7 8h1v1h-1zM8 8h1v1h-1zM10 8h1v1h-1zM4 9h1v1h-1zM5 9h1v1h-1zM6 9h1v1h-1zM7 9h1v1h-1zM10 9h1v1h-1zM2 10h1v1h-1zM3 10h1v1h-1zM8 10h1v1h-1zM9 10h1v1h-1zM4 11h1v1h-1zM5 11h1v1h-1zM6 11h1v1h-1zM7 11h1v1h-1z" fill="#ffffff"/><path d="M9 3h1v1h-1zM10 4h1v1h-1zM10 5h1v1h-1zM10 6h1v1h-1zM10 7h1v1h-1zM9 8h1v1h-1zM2 9h1v1h-1zM3 9h1v1h-1zM8 9h1v1h-1zM9 9h1v1h-1zM4 10h1v1h-1zM5 10h1v1h-1zM6 10h1v1h-1zM7 10h1v1h-1z" fill="#d4d0c8"/></svg></div>
<div class="t" style="left:32px;top:532px;font-size:13px;line-height:13px;font-weight:bold;color:#000;">LCD</div>
<div style="left:86px;top:486px;width:171px;height:69px;border:1px solid #808080;box-shadow:inset 1px 1px #ffffff,1px 1px #ffffff;"></div>
<div style="left:95px;top:500px;width:12px;height:12px;"><svg width="12" height="12" shape-rendering="crispEdges"><path d="M4 0h1v1h-1zM5 0h1v1h-1zM6 0h1v1h-1zM7 0h1v1h-1zM2 1h1v1h-1zM3 1h1v1h-1zM8 1h1v1h-1zM9 1h1v1h-1zM1 2h1v1h-1zM1 3h1v1h-1zM0 4h1v1h-1zM0 5h1v1h-1zM0 6h1v1h-1zM0 7h1v1h-1zM1 8h1v1h-1zM1 9h1v1h-1z" fill="#808080"/><path d="M4 1h1v1h-1zM5 1h1v1h-1zM6 1h1v1h-1zM7 1h1v1h-1zM2 2h1v1h-1zM3 2h1v1h-1zM8 2h1v1h-1zM9 2h1v1h-1zM2 3h1v1h-1zM1 4h1v1h-1zM1 5h1v1h-1zM1 6h1v1h-1zM1 7h1v1h-1zM2 8h1v1h-1z" fill="#404040"/><path d="M4 2h1v1h-1zM5 2h1v1h-1zM6 2h1v1h-1zM7 2h1v1h-1zM10 2h1v1h-1zM3 3h1v1h-1zM4 3h1v1h-1zM5 3h1v1h-1zM6 3h1v1h-1zM7 3h1v1h-1zM8 3h1v1h-1zM10 3h1v1h-1zM2 4h1v1h-1zM3 4h1v1h-1zM4 4h1v1h-1zM7 4h1v1h-1zM8 4h1v1h-1zM9 4h1v1h-1zM11 4h1v1h-1zM2 5h1v1h-1zM3 5h1v1h-1zM8 5h1v1h-1zM9 5h1v1h-1zM11 5h1v1h-1zM2 6h1v1h-1zM3 6h1v1h-1zM8 6h1v1h-1zM9 6h1v1h-1zM11 6h1v1h-1zM2 7h1v1h-1zM3 7h1v1h-1zM4 7h1v1h-1zM7 7h1v1h-1zM8 7h1v1h-1zM9 7h1v1h-1zM11 7h1v1h-1zM3 8h1v1h-1zM4 8h1v1h-1zM5 8h1v1h-1zM6 8h1v1h-1zM7 8h1v1h-1zM8 8h1v1h-1zM10 8h1v1h-1zM4 9h1v1h-1zM5 9h1v1h-1zM6 9h1v1h-1zM7 9h1v1h-1zM10 9h1v1h-1zM2 10h1v1h-1zM3 10h1v1h-1zM8 10h1v1h-1zM9 10h1v1h-1zM4 11h1v1h-1zM5 11h1v1h-1zM6 11h1v1h-1zM7 11h1v1h-1z" fill="#ffffff"/><path d="M9 3h1v1h-1zM10 4h1v1h-1zM10 5h1v1h-1zM10 6h1v1h-1zM10 7h1v1h-1zM9 8h1v1h-1zM2 9h1v1h-1zM3 9h1v1h-1zM8 9h1v1h-1zM9 9h1v1h-1zM4 10h1v1h-1zM5 10h1v1h-1zM6 10h1v1h-1zM7 10h1v1h-1z" fill="#d4d0c8"/><path d="M5 4h1v1h-1zM6 4h1v1h-1zM4 5h1v1h-1zM5 5h1v1h-1zM6 5h1v1h-1zM7 5h1v1h-1zM4 6h1v1h-1zM5 6h1v1h-1zM6 6h1v1h-1zM7 6h1v1h-1zM5 7h1v1h-1zM6 7h1v1h-1z" fill="#000"/></svg></div>
<div class="t" style="left:112px;top:498px;font-size:13px;line-height:13px;font-weight:bold;color:#000;">Tato strana</div>
<div style="left:95px;top:519px;width:12px;height:12px;"><svg width="12" height="12" shape-rendering="crispEdges"><path d="M4 0h1v1h-1zM5 0h1v1h-1zM6 0h1v1h-1zM7 0h1v1h-1zM2 1h1v1h-1zM3 1h1v1h-1zM8 1h1v1h-1zM9 1h1v1h-1zM1 2h1v1h-1zM1 3h1v1h-1zM0 4h1v1h-1zM0 5h1v1h-1zM0 6h1v1h-1zM0 7h1v1h-1zM1 8h1v1h-1zM1 9h1v1h-1z" fill="#808080"/><path d="M4 1h1v1h-1zM5 1h1v1h-1zM6 1h1v1h-1zM7 1h1v1h-1zM2 2h1v1h-1zM3 2h1v1h-1zM8 2h1v1h-1zM9 2h1v1h-1zM2 3h1v1h-1zM1 4h1v1h-1zM1 5h1v1h-1zM1 6h1v1h-1zM1 7h1v1h-1zM2 8h1v1h-1z" fill="#404040"/><path d="M4 2h1v1h-1zM5 2h1v1h-1zM6 2h1v1h-1zM7 2h1v1h-1zM10 2h1v1h-1zM3 3h1v1h-1zM4 3h1v1h-1zM5 3h1v1h-1zM6 3h1v1h-1zM7 3h1v1h-1zM8 3h1v1h-1zM10 3h1v1h-1zM2 4h1v1h-1zM3 4h1v1h-1zM4 4h1v1h-1zM5 4h1v1h-1zM6 4h1v1h-1zM7 4h1v1h-1zM8 4h1v1h-1zM9 4h1v1h-1zM11 4h1v1h-1zM2 5h1v1h-1zM3 5h1v1h-1zM4 5h1v1h-1zM5 5h1v1h-1zM6 5h1v1h-1zM7 5h1v1h-1zM8 5h1v1h-1zM9 5h1v1h-1zM11 5h1v1h-1zM2 6h1v1h-1zM3 6h1v1h-1zM4 6h1v1h-1zM5 6h1v1h-1zM6 6h1v1h-1zM7 6h1v1h-1zM8 6h1v1h-1zM9 6h1v1h-1zM11 6h1v1h-1zM2 7h1v1h-1zM3 7h1v1h-1zM4 7h1v1h-1zM5 7h1v1h-1zM6 7h1v1h-1zM7 7h1v1h-1zM8 7h1v1h-1zM9 7h1v1h-1zM11 7h1v1h-1zM3 8h1v1h-1zM4 8h1v1h-1zM5 8h1v1h-1zM6 8h1v1h-1zM7 8h1v1h-1zM8 8h1v1h-1zM10 8h1v1h-1zM4 9h1v1h-1zM5 9h1v1h-1zM6 9h1v1h-1zM7 9h1v1h-1zM10 9h1v1h-1zM2 10h1v1h-1zM3 10h1v1h-1zM8 10h1v1h-1zM9 10h1v1h-1zM4 11h1v1h-1zM5 11h1v1h-1zM6 11h1v1h-1zM7 11h1v1h-1z" fill="#ffffff"/><path d="M9 3h1v1h-1zM10 4h1v1h-1zM10 5h1v1h-1zM10 6h1v1h-1zM10 7h1v1h-1zM9 8h1v1h-1zM2 9h1v1h-1zM3 9h1v1h-1zM8 9h1v1h-1zM9 9h1v1h-1zM4 10h1v1h-1zM5 10h1v1h-1zM6 10h1v1h-1zM7 10h1v1h-1z" fill="#d4d0c8"/></svg></div>
<div class="t" style="left:112px;top:518px;font-size:13px;line-height:13px;font-weight:bold;color:#000;">uziv/zony/zony</div>
<div style="left:95px;top:538px;width:12px;height:12px;"><svg width="12" height="12" shape-rendering="crispEdges"><path d="M4 0h1v1h-1zM5 0h1v1h-1zM6 0h1v1h-1zM7 0h1v1h-1zM2 1h1v1h-1zM3 1h1v1h-1zM8 1h1v1h-1zM9 1h1v1h-1zM1 2h1v1h-1zM1 3h1v1h-1zM0 4h1v1h-1zM0 5h1v1h-1zM0 6h1v1h-1zM0 7h1v1h-1zM1 8h1v1h-1zM1 9h1v1h-1z" fill="#808080"/><path d="M4 1h1v1h-1zM5 1h1v1h-1zM6 1h1v1h-1zM7 1h1v1h-1zM2 2h1v1h-1zM3 2h1v1h-1zM8 2h1v1h-1zM9 2h1v1h-1zM2 3h1v1h-1zM1 4h1v1h-1zM1 5h1v1h-1zM1 6h1v1h-1zM1 7h1v1h-1zM2 8h1v1h-1z" fill="#404040"/><path d="M4 2h1v1h-1zM5 2h1v1h-1zM6 2h1v1h-1zM7 2h1v1h-1zM10 2h1v1h-1zM3 3h1v1h-1zM4 3h1v1h-1zM5 3h1v1h-1zM6 3h1v1h-1zM7 3h1v1h-1zM8 3h1v1h-1zM10 3h1v1h-1zM2 4h1v1h-1zM3 4h1v1h-1zM4 4h1v1h-1zM5 4h1v1h-1zM6 4h1v1h-1zM7 4h1v1h-1zM8 4h1v1h-1zM9 4h1v1h-1zM11 4h1v1h-1zM2 5h1v1h-1zM3 5h1v1h-1zM4 5h1v1h-1zM5 5h1v1h-1zM6 5h1v1h-1zM7 5h1v1h-1zM8 5h1v1h-1zM9 5h1v1h-1zM11 5h1v1h-1zM2 6h1v1h-1zM3 6h1v1h-1zM4 6h1v1h-1zM5 6h1v1h-1zM6 6h1v1h-1zM7 6h1v1h-1zM8 6h1v1h-1zM9 6h1v1h-1zM11 6h1v1h-1zM2 7h1v1h-1zM3 7h1v1h-1zM4 7h1v1h-1zM5 7h1v1h-1zM6 7h1v1h-1zM7 7h1v1h-1zM8 7h1v1h-1zM9 7h1v1h-1zM11 7h1v1h-1zM3 8h1v1h-1zM4 8h1v1h-1zM5 8h1v1h-1zM6 8h1v1h-1zM7 8h1v1h-1zM8 8h1v1h-1zM10 8h1v1h-1zM4 9h1v1h-1zM5 9h1v1h-1zM6 9h1v1h-1zM7 9h1v1h-1zM10 9h1v1h-1zM2 10h1v1h-1zM3 10h1v1h-1zM8 10h1v1h-1zM9 10h1v1h-1zM4 11h1v1h-1zM5 11h1v1h-1zM6 11h1v1h-1zM7 11h1v1h-1z" fill="#ffffff"/><path d="M9 3h1v1h-1zM10 4h1v1h-1zM10 5h1v1h-1zM10 6h1v1h-1zM10 7h1v1h-1zM9 8h1v1h-1zM2 9h1v1h-1zM3 9h1v1h-1zM8 9h1v1h-1zM9 9h1v1h-1zM4 10h1v1h-1zM5 10h1v1h-1zM6 10h1v1h-1zM7 10h1v1h-1z" fill="#d4d0c8"/></svg></div>
<div class="t" style="left:112px;top:537px;font-size:13px;line-height:13px;font-weight:bold;color:#000;">Syst zpravy</div>
<div style="left:261px;top:486px;width:91px;height:69px;border:1px solid #808080;box-shadow:inset 1px 1px #ffffff,1px 1px #ffffff;"></div>
<div class="t" style="left:268px;top:481px;font-size:13px;line-height:13px;font-weight:bold;background:#d4d0c8;padding:0 1px;">Poslat do</div>
<div style="left:270px;top:504px;width:12px;height:12px;"><svg width="12" height="12" shape-rendering="crispEdges"><path d="M4 0h1v1h-1zM5 0h1v1h-1zM6 0h1v1h-1zM7 0h1v1h-1zM2 1h1v1h-1zM3 1h1v1h-1zM8 1h1v1h-1zM9 1h1v1h-1zM1 2h1v1h-1zM1 3h1v1h-1zM0 4h1v1h-1zM0 5h1v1h-1zM0 6h1v1h-1zM0 7h1v1h-1zM1 8h1v1h-1zM1 9h1v1h-1z" fill="#808080"/><path d="M4 1h1v1h-1zM5 1h1v1h-1zM6 1h1v1h-1zM7 1h1v1h-1zM2 2h1v1h-1zM3 2h1v1h-1zM8 2h1v1h-1zM9 2h1v1h-1zM2 3h1v1h-1zM1 4h1v1h-1zM1 5h1v1h-1zM1 6h1v1h-1zM1 7h1v1h-1zM2 8h1v1h-1z" fill="#404040"/><path d="M4 2h1v1h-1zM5 2h1v1h-1zM6 2h1v1h-1zM7 2h1v1h-1zM10 2h1v1h-1zM3 3h1v1h-1zM4 3h1v1h-1zM5 3h1v1h-1zM6 3h1v1h-1zM7 3h1v1h-1zM8 3h1v1h-1zM10 3h1v1h-1zM2 4h1v1h-1zM3 4h1v1h-1zM4 4h1v1h-1zM7 4h1v1h-1zM8 4h1v1h-1zM9 4h1v1h-1zM11 4h1v1h-1zM2 5h1v1h-1zM3 5h1v1h-1zM8 5h1v1h-1zM9 5h1v1h-1zM11 5h1v1h-1zM2 6h1v1h-1zM3 6h1v1h-1zM8 6h1v1h-1zM9 6h1v1h-1zM11 6h1v1h-1zM2 7h1v1h-1zM3 7h1v1h-1zM4 7h1v1h-1zM7 7h1v1h-1zM8 7h1v1h-1zM9 7h1v1h-1zM11 7h1v1h-1zM3 8h1v1h-1zM4 8h1v1h-1zM5 8h1v1h-1zM6 8h1v1h-1zM7 8h1v1h-1zM8 8h1v1h-1zM10 8h1v1h-1zM4 9h1v1h-1zM5 9h1v1h-1zM6 9h1v1h-1zM7 9h1v1h-1zM10 9h1v1h-1zM2 10h1v1h-1zM3 10h1v1h-1zM8 10h1v1h-1zM9 10h1v1h-1zM4 11h1v1h-1zM5 11h1v1h-1zM6 11h1v1h-1zM7 11h1v1h-1z" fill="#ffffff"/><path d="M9 3h1v1h-1zM10 4h1v1h-1zM10 5h1v1h-1zM10 6h1v1h-1zM10 7h1v1h-1zM9 8h1v1h-1zM2 9h1v1h-1zM3 9h1v1h-1zM8 9h1v1h-1zM9 9h1v1h-1zM4 10h1v1h-1zM5 10h1v1h-1zM6 10h1v1h-1zM7 10h1v1h-1z" fill="#d4d0c8"/><path d="M5 4h1v1h-1zM6 4h1v1h-1zM4 5h1v1h-1zM5 5h1v1h-1zM6 5h1v1h-1zM7 5h1v1h-1zM4 6h1v1h-1zM5 6h1v1h-1zM6 6h1v1h-1zM7 6h1v1h-1zM5 7h1v1h-1zM6 7h1v1h-1z" fill="#000"/></svg></div>
<div class="t" style="left:288px;top:503px;font-size:13px;line-height:13px;font-weight:bold;color:#000;">Teto</div>
<div style="left:270px;top:533px;width:12px;height:12px;"><svg width="12" height="12" shape-rendering="crispEdges"><path d="M4 0h1v1h-1zM5 0h1v1h-1zM6 0h1v1h-1zM7 0h1v1h-1zM2 1h1v1h-1zM3 1h1v1h-1zM8 1h1v1h-1zM9 1h1v1h-1zM1 2h1v1h-1zM1 3h1v1h-1zM0 4h1v1h-1zM0 5h1v1h-1zM0 6h1v1h-1zM0 7h1v1h-1zM1 8h1v1h-1zM1 9h1v1h-1z" fill="#808080"/><path d="M4 1h1v1h-1zM5 1h1v1h-1zM6 1h1v1h-1zM7 1h1v1h-1zM2 2h1v1h-1zM3 2h1v1h-1zM8 2h1v1h-1zM9 2h1v1h-1zM2 3h1v1h-1zM1 4h1v1h-1zM1 5h1v1h-1zM1 6h1v1h-1zM1 7h1v1h-1zM2 8h1v1h-1z" fill="#404040"/><path d="M4 2h1v1h-1zM5 2h1v1h-1zM6 2h1v1h-1zM7 2h1v1h-1zM10 2h1v1h-1zM3 3h1v1h-1zM4 3h1v1h-1zM5 3h1v1h-1zM6 3h1v1h-1zM7 3h1v1h-1zM8 3h1v1h-1zM10 3h1v1h-1zM2 4h1v1h-1zM3 4h1v1h-1zM4 4h1v1h-1zM5 4h1v1h-1zM6 4h1v1h-1zM7 4h1v1h-1zM8 4h1v1h-1zM9 4h1v1h-1zM11 4h1v1h-1zM2 5h1v1h-1zM3 5h1v1h-1zM4 5h1v1h-1zM5 5h1v1h-1zM6 5h1v1h-1zM7 5h1v1h-1zM8 5h1v1h-1zM9 5h1v1h-1zM11 5h1v1h-1zM2 6h1v1h-1zM3 6h1v1h-1zM4 6h1v1h-1zM5 6h1v1h-1zM6 6h1v1h-1zM7 6h1v1h-1zM8 6h1v1h-1zM9 6h1v1h-1zM11 6h1v1h-1zM2 7h1v1h-1zM3 7h1v1h-1zM4 7h1v1h-1zM5 7h1v1h-1zM6 7h1v1h-1zM7 7h1v1h-1zM8 7h1v1h-1zM9 7h1v1h-1zM11 7h1v1h-1zM3 8h1v1h-1zM4 8h1v1h-1zM5 8h1v1h-1zM6 8h1v1h-1zM7 8h1v1h-1zM8 8h1v1h-1zM10 8h1v1h-1zM4 9h1v1h-1zM5 9h1v1h-1zM6 9h1v1h-1zM7 9h1v1h-1zM10 9h1v1h-1zM2 10h1v1h-1zM3 10h1v1h-1zM8 10h1v1h-1zM9 10h1v1h-1zM4 11h1v1h-1zM5 11h1v1h-1zM6 11h1v1h-1zM7 11h1v1h-1z" fill="#ffffff"/><path d="M9 3h1v1h-1zM10 4h1v1h-1zM10 5h1v1h-1zM10 6h1v1h-1zM10 7h1v1h-1zM9 8h1v1h-1zM2 9h1v1h-1zM3 9h1v1h-1zM8 9h1v1h-1zM9 9h1v1h-1zM4 10h1v1h-1zM5 10h1v1h-1zM6 10h1v1h-1zM7 10h1v1h-1z" fill="#d4d0c8"/></svg></div>
<div class="t" style="left:288px;top:532px;font-size:13px;line-height:13px;font-weight:bold;color:#000;">Vsech</div>
<div style="left:355px;top:486px;width:100px;height:69px;border:1px solid #808080;box-shadow:inset 1px 1px #ffffff,1px 1px #ffffff;"></div>
<div style="left:359px;top:490px;width:95px;height:65px;background:#d4d0c8;"></div>
<div style="left:359px;top:490px;width:95px;height:1px;background:#ffffff;"></div>
<div style="left:359px;top:490px;width:1px;height:65px;background:#ffffff;"></div>
<div style="left:359px;top:554px;width:95px;height:1px;background:#808080;"></div>
<div style="left:453px;top:490px;width:1px;height:65px;background:#808080;"></div>
<div style="left:458px;top:486px;width:55px;height:69px;border:1px solid #808080;box-shadow:inset 1px 1px #ffffff,1px 1px #ffffff;"></div>
<div style="left:462px;top:490px;width:50px;height:65px;background:#d4d0c8;"></div>
<div style="left:462px;top:490px;width:50px;height:1px;background:#ffffff;"></div>
<div style="left:462px;top:490px;width:1px;height:65px;background:#ffffff;"></div>
<div style="left:462px;top:554px;width:50px;height:1px;background:#808080;"></div>
<div style="left:511px;top:490px;width:1px;height:65px;background:#808080;"></div>
<div style="left:517px;top:486px;width:204px;height:69px;border:1px solid #808080;box-shadow:inset 1px 1px #ffffff,1px 1px #ffffff;"></div>
<div style="left:569px;top:490px;width:50px;height:55px;background:#d4d0c8;"></div>
<div style="left:569px;top:490px;width:50px;height:1px;background:#ffffff;"></div>
<div style="left:569px;top:490px;width:1px;height:55px;background:#ffffff;"></div>
<div style="left:569px;top:544px;width:50px;height:1px;background:#808080;"></div>
<div style="left:618px;top:490px;width:1px;height:55px;background:#808080;"></div>
<div style="left:619px;top:490px;width:50px;height:55px;background:#d4d0c8;"></div>
<div style="left:619px;top:490px;width:50px;height:1px;background:#ffffff;"></div>
<div style="left:619px;top:490px;width:1px;height:55px;background:#ffffff;"></div>
<div style="left:619px;top:544px;width:50px;height:1px;background:#808080;"></div>
<div style="left:668px;top:490px;width:1px;height:55px;background:#808080;"></div>
<div style="left:669px;top:490px;width:50px;height:55px;background:#d4d0c8;"></div>
<div style="left:669px;top:490px;width:50px;height:1px;background:#ffffff;"></div>
<div style="left:669px;top:490px;width:1px;height:55px;background:#ffffff;"></div>
<div style="left:669px;top:544px;width:50px;height:1px;background:#808080;"></div>
<div style="left:718px;top:490px;width:1px;height:55px;background:#808080;"></div>
<div style="left:519px;top:547px;width:202px;height:8px;background:#ffffff;"></div>
<div style="left:362px;top:497px;width:34px;height:34px;"><svg width="34" height="34" shape-rendering="crispEdges"><rect x="6" y="1" width="22" height="19" fill="#000"/><rect x="6" y="1" width="21" height="18" fill="#8a8a8a"/><rect x="7" y="2" width="20" height="17" fill="#e4e4e4"/><rect x="7" y="2" width="19" height="1" fill="#fff"/><rect x="9" y="5" width="15" height="11" fill="#000"/><rect x="10" y="6" width="13" height="9" fill="#00e6f0"/><path d="M11 8h1v1h-1zM14 8h1v1h-1zM17 8h1v1h-1zM20 8h1v1h-1zM11 12h1v1h-1zM14 12h1v1h-1zM17 12h1v1h-1zM20 12h1v1h-1z" fill="#40a0b0"/><rect x="3" y="19" width="28" height="7" fill="#000"/><rect x="3" y="19" width="27" height="6" fill="#d8d8d8"/><rect x="4" y="19" width="26" height="1" fill="#f4f4f4"/><rect x="15" y="23" width="9" height="1" fill="#202020"/><path d="M1 26H22V32H1Z" fill="#000"/><path d="M1 26H21V31H1Z" fill="#f0f0f0"/><path d="M3 29h2v-1h1v-1h1v1h-1v1h-1v1h-2zM6 29h2v-1h1v-1h1v1h-1v1h-1v1h-2zM9 29h2v-1h1v-1h1v1h-1v1h-1v1h-2zM12 29h2v-1h1v-1h1v1h-1v1h-1v1h-2zM15 29h2v-1h1v-1h1v1h-1v1h-1v1h-2z" fill="#000"/><path d="M21 27H32V33H21Z" fill="#000"/><path d="M22 27H31V32H22Z" fill="#f0f0f0"/></svg></div>
<div style="left:394px;top:499px;width:21px;height:23px;"><svg width="21" height="23"><path d="M0 6H8V0L20 11.5L8 23V16H0Z" fill="#e00000"/><path d="M8 0L20 11.5L8 23" fill="none" stroke="#700000" stroke-width="0.8"/></svg></div>
<div style="left:413px;top:497px;width:39px;height:46px;"><svg width="39" height="46" viewBox="0 0 39 46" shape-rendering="crispEdges"><path d="M5 1H33V3H35V5H36V41H34V43H32V45H5V43H3V41H1V5H3V3H5Z" fill="#000"/><rect x="6" y="2" width="27" height="1" fill="#fff"/><rect x="5" y="7" width="26" height="9" fill="#b4b4b4"/><text x="6" y="15" font-family="Liberation Sans" font-weight="bold" font-size="8.2" textLength="25" lengthAdjust="spacingAndGlyphs" fill="#000" shape-rendering="auto">MESSA.</text><path d="M2 20H4V19H6V40H2Z" fill="#fff"/><path d="M29 19H33V20H35V40H29Z" fill="#fff"/><path d="M4 40H33V42H31V44H6V42H4Z" fill="#fff"/><rect x="7" y="18" width="22" height="22" fill="#000"/><rect x="8" y="19" width="20" height="20" fill="#fff"/><rect x="10" y="21" width="2" height="2" fill="#7a7a7a"/><rect x="10" y="24" width="2" height="2" fill="#7a7a7a"/><rect x="15" y="21" width="2" height="2" fill="#7a7a7a"/><rect x="15" y="24" width="2" height="2" fill="#7a7a7a"/><rect x="20" y="21" width="2" height="2" fill="#7a7a7a"/><rect x="20" y="24" width="2" height="2" fill="#7a7a7a"/><rect x="25" y="21" width="2" height="2" fill="#7a7a7a"/><rect x="25" y="24" width="2" height="2" fill="#7a7a7a"/><rect x="10" y="27" width="4" height="2" fill="#7a7a7a"/><rect x="10" y="30" width="4" height="2" fill="#7a7a7a"/><rect x="10" y="33" width="4" height="2" fill="#7a7a7a"/><rect x="10" y="36" width="4" height="2" fill="#7a7a7a"/><rect x="16" y="27" width="4" height="2" fill="#7a7a7a"/><rect x="16" y="30" width="4" height="2" fill="#7a7a7a"/><rect x="16" y="33" width="4" height="2" fill="#7a7a7a"/><rect x="16" y="36" width="4" height="2" fill="#7a7a7a"/><rect x="22" y="27" width="4" height="2" fill="#7a7a7a"/><rect x="22" y="30" width="4" height="2" fill="#7a7a7a"/><rect x="22" y="33" width="4" height="2" fill="#7a7a7a"/><rect x="22" y="36" width="4" height="2" fill="#7a7a7a"/><rect x="31" y="23" width="3" height="2" fill="#7a7a7a"/><rect x="31" y="26" width="3" height="2" fill="#7a7a7a"/><rect x="3" y="25" width="2" height="1" fill="#6c6"/><rect x="37" y="8" width="1" height="32" fill="#a8a8a8"/></svg></div>
<div style="left:463px;top:498px;width:48px;height:48px;"><svg width="48" height="48"><circle cx="24" cy="23.7" r="23.6" fill="#0a8a0a"/></svg></div>
<div class="t" style="left:468px;top:516px;font-family:'Liberation Mono';font-weight:bold;font-size:13px;line-height:13px;letter-spacing:-0.4px;color:#f2fff0;">START</div>
<div style="left:572px;top:497px;width:44px;height:40px;"><svg width="44" height="40"><path d="M30.5 6L41.5 17.5L20.5 39L9.5 28Z" fill="#0b5e0b"/><path d="M30.5 8L39.5 17.5L20.5 37L11.5 28Z" fill="#1f8a1f"/><rect x="26" y="16" width="4" height="3" fill="#000" transform="rotate(-45 28 17)"/><path d="M23 29L33 19" stroke="#c8ffc8" stroke-width="1"/><path d="M17 31l2-2M20 34l2-2M28 30l3-3M33 25l2-2" stroke="#000" stroke-width="1.5"/><path d="M11.5 1.5L23 22H1Z" fill="#000"/><path d="M11.5 4.5L21 20.5H3Z" fill="#fff"/><path d="M11.5 6.5L19.5 19.5H4.5Z" fill="#e00000"/></svg></div>
<div style="left:620px;top:500px;width:12px;height:14px;"><svg width="12" height="14"><path d="M0 4H5V0L11.5 7L5 14V10H0Z" fill="#e00000"/></svg></div>
<div style="left:631px;top:494px;width:39px;height:46px;"><svg width="39" height="46" viewBox="0 0 39 46" shape-rendering="crispEdges"><path d="M5 1H33V3H35V5H36V41H34V43H32V45H5V43H3V41H1V5H3V3H5Z" fill="#000"/><rect x="6" y="2" width="27" height="1" fill="#fff"/><rect x="5" y="7" width="26" height="9" fill="#b4b4b4"/><text x="6" y="15" font-family="Liberation Sans" font-weight="bold" font-size="8.2" textLength="25" lengthAdjust="spacingAndGlyphs" fill="#000" shape-rendering="auto">MESSA.</text><path d="M2 20H4V19H6V40H2Z" fill="#fff"/><path d="M29 19H33V20H35V40H29Z" fill="#fff"/><path d="M4 40H33V42H31V44H6V42H4Z" fill="#fff"/><rect x="7" y="18" width="22" height="22" fill="#000"/><rect x="8" y="19" width="20" height="20" fill="#fff"/><rect x="10" y="21" width="2" height="2" fill="#7a7a7a"/><rect x="10" y="24" width="2" height="2" fill="#7a7a7a"/><rect x="15" y="21" width="2" height="2" fill="#7a7a7a"/><rect x="15" y="24" width="2" height="2" fill="#7a7a7a"/><rect x="20" y="21" width="2" height="2" fill="#7a7a7a"/><rect x="20" y="24" width="2" height="2" fill="#7a7a7a"/><rect x="25" y="21" width="2" height="2" fill="#7a7a7a"/><rect x="25" y="24" width="2" height="2" fill="#7a7a7a"/><rect x="10" y="27" width="4" height="2" fill="#7a7a7a"/><rect x="10" y="30" width="4" height="2" fill="#7a7a7a"/><rect x="10" y="33" width="4" height="2" fill="#7a7a7a"/><rect x="10" y="36" width="4" height="2" fill="#7a7a7a"/><rect x="16" y="27" width="4" height="2" fill="#7a7a7a"/><rect x="16" y="30" width="4" height="2" fill="#7a7a7a"/><rect x="16" y="33" width="4" height="2" fill="#7a7a7a"/><rect x="16" y="36" width="4" height="2" fill="#7a7a7a"/><rect x="22" y="27" width="4" height="2" fill="#7a7a7a"/><rect x="22" y="30" width="4" height="2" fill="#7a7a7a"/><rect x="22" y="33" width="4" height="2" fill="#7a7a7a"/><rect x="22" y="36" width="4" height="2" fill="#7a7a7a"/><rect x="31" y="23" width="3" height="2" fill="#7a7a7a"/><rect x="31" y="26" width="3" height="2" fill="#7a7a7a"/><rect x="3" y="25" width="2" height="1" fill="#6c6"/><rect x="37" y="8" width="1" height="32" fill="#a8a8a8"/></svg></div>
<div style="left:680px;top:503px;width:28px;height:28px;"><svg width="28" height="28"><path d="M2 2L26 26M26 2L2 26" stroke="#000" stroke-width="5"/></svg></div>
</body></html>
